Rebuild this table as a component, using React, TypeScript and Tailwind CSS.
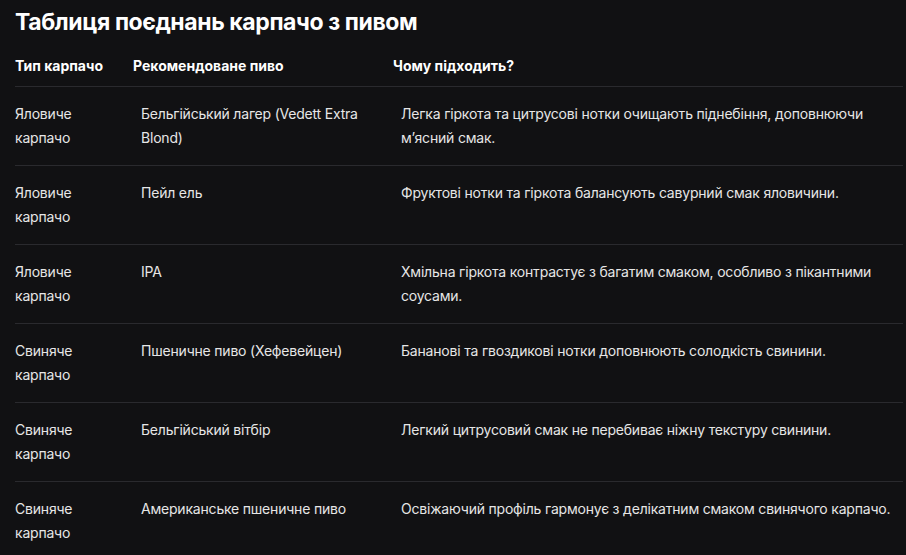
import React from "react";

const rows: [string, string, string][] = [
  ["Яловиче карпачо", "Бельгійський лагер (Vedett Extra Blond)", "Легка гіркота та цитрусові нотки очищають піднебіння, доповнюючи м’ясний смак."],
  ["Яловиче карпачо", "Пейл ель", "Фруктові нотки та гіркота балансують савурний смак яловичини."],
  ["Яловиче карпачо", "IPA", "Хмільна гіркота контрастує з багатим смаком, особливо з пікантними соусами."],
  ["Свиняче карпачо", "Пшеничне пиво (Хефевейцен)", "Бананові та гвоздикові нотки доповнюють солодкість свинини."],
  ["Свиняче карпачо", "Бельгійський вітбір", "Легкий цитрусовий смак не перебиває ніжну текстуру свинини."],
  ["Свиняче карпачо", "Американське пшеничне пиво", "Освіжаючий профіль гармонує з делікатним смаком свинячого карпачо."],
];

export default function App() {
  return (
    <div
      className="min-h-screen w-full bg-[#111113] pl-[15px] pt-[6px] text-[#e6e6e6]"
      style={{ fontFamily: "Inter, 'Noto Sans', sans-serif" }}
    >
      <h1 className="text-[23px] font-bold leading-8 tracking-[-0.4px] text-white">Таблиця поєднань карпачо з пивом</h1>
      <table className="mt-2 w-[888px] table-fixed border-collapse text-left text-[14px]">
        <colgroup>
          <col className="w-[110px]" />
          <col className="w-[260px]" />
          <col />
        </colgroup>
        <thead>
          <tr className="border-b border-[#2a2a2e]">
            <th className="py-[10px] pl-0 pr-2 align-bottom font-bold leading-5 text-white">Тип карпачо</th>
            <th className="py-[10px] pl-2 pr-2 align-bottom font-bold leading-5 text-white">Рекомендоване пиво</th>
            <th className="py-[10px] pl-2 pr-2 align-bottom font-bold leading-5 text-white">Чому підходить?</th>
          </tr>
        </thead>
        <tbody>
          {rows.map((r, i) => (
            <tr key={i} className="border-b border-[#2a2a2e]">
              <td className="py-[15px] pl-0 pr-4 align-top leading-6 tracking-[-0.2px]">{r[0]}</td>
              <td className="py-[15px] pl-4 pr-4 align-top leading-6 tracking-[-0.2px]">{r[1]}</td>
              <td className="py-[15px] pl-4 pr-0 align-top leading-6 tracking-[-0.2px]">{r[2]}</td>
            </tr>
          ))}
        </tbody>
      </table>
    </div>
  );
}
